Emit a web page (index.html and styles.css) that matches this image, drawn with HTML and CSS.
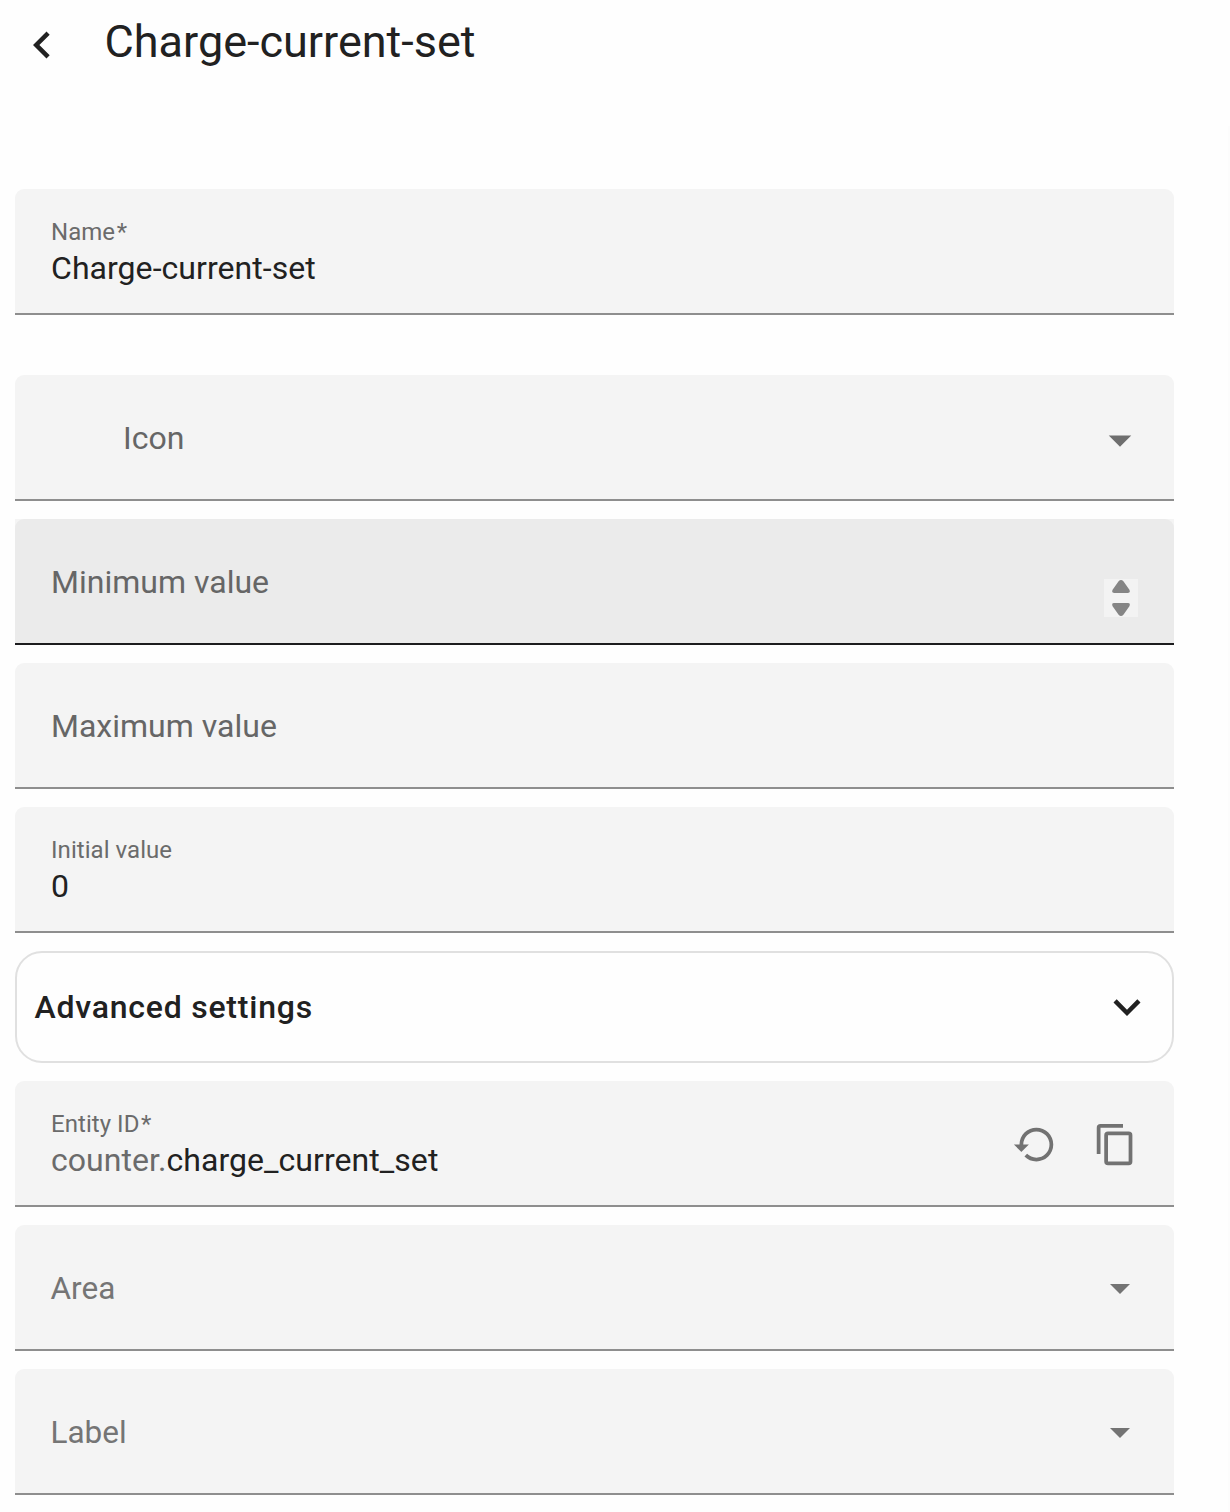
FILE: index.html
```html
<!DOCTYPE html>
<html lang="en">
<head>
<meta charset="utf-8">
<title>Charge-current-set</title>
<link rel="stylesheet" href="styles.css">
</head>
<body>
<main class="dialog">
  <header class="header">
    <svg class="icon" viewBox="0 0 24 24"><path d="M15.41 16.58L10.83 12l4.58-4.59L14 6l-6 6 6 6z"/></svg>
    <h1 class="title">Charge-current-set</h1>
  </header>
  <form class="form">
    <div class="field field-name">
      <div class="stack"><span class="caption">Name<span class="star">*</span></span><span class="value">Charge-current-set</span></div>
    </div>
    <div class="field field-icon">
      <span class="label">Icon</span>
      <svg class="icon arrow" viewBox="0 0 24 24"><path d="M7 10l5 5 5-5z"/></svg>
    </div>
    <div class="hover-wrap">
      <div class="field field-hover">
        <span class="label">Minimum value</span>
        <svg class="spinner" viewBox="0 0 34 38"><path d="M14.6 2.2Q17 -.2 19.4 2.2L25.4 10.8Q26.8 14 23.8 14H10.2Q7.2 14 8.6 10.8zM14.6 35.8Q17 38.2 19.4 35.8L25.4 27.2Q26.8 24 23.8 24H10.2Q7.2 24 8.6 27.2z"/></svg>
      </div>
    </div>
    <div class="field"><span class="label">Maximum value</span></div>
    <div class="field">
      <div class="stack"><span class="caption">Initial value</span><span class="value">0</span></div>
    </div>
    <div class="panel">
      <span class="panel-title">Advanced settings</span>
      <svg class="icon" viewBox="0 0 24 24"><path d="M7.41 8.58L12 13.17l4.59-4.59L18 10l-6 6-6-6z"/></svg>
    </div>
    <div class="field">
      <div class="stack"><span class="caption">Entity ID<span class="star">*</span></span><span class="value"><span class="prefix">counter.</span>charge_current_set</span></div>
      <div class="actions">
        <svg class="action" viewBox="0 0 24 24"><path d="M13 3A9 9 0 0 0 4 12H1L4.89 15.89L4.96 16.03L9 12H6A7 7 0 0 1 13 5A7 7 0 0 1 20 12A7 7 0 0 1 13 19C11.07 19 9.32 18.21 8.06 16.94L6.64 18.36C8.27 20 10.5 21 13 21A9 9 0 0 0 22 12A9 9 0 0 0 13 3Z"/></svg>
        <svg class="action" viewBox="0 0 24 24"><path d="M19 21H8V7H19M19 5H8A2 2 0 0 0 6 7V21A2 2 0 0 0 8 23H19A2 2 0 0 0 21 21V7A2 2 0 0 0 19 5M16 1H4A2 2 0 0 0 2 3V17H4V3H16V1Z"/></svg>
      </div>
    </div>
    <div class="field">
      <span class="label picker">Area</span>
      <svg class="icon arrow-small" viewBox="0 0 24 24"><path d="M7 10l5 5 5-5z"/></svg>
    </div>
    <div class="field">
      <span class="label picker">Label</span>
      <svg class="icon arrow-small" viewBox="0 0 24 24"><path d="M7 10l5 5 5-5z"/></svg>
    </div>
  </form>
</main>
</body>
</html>
```
FILE: styles.css
```css
* { box-sizing: border-box; }
body {
  margin: 0;
  height: 1512px;
  overflow: hidden;
  /* faint scroll track along the right edge, below the header */
  background: linear-gradient(#fcfcfc, #fcfcfc) right 126px / 2px 100% no-repeat #fefefe;
  color: #212121;
  font-family: Roboto, "Liberation Sans", sans-serif;
}
svg { display: block; flex: none; fill: currentColor; }
.header {
  display: flex;
  gap: 35.5px;
  height: 189px;
  padding: 18px 15px 0;
}
.icon { width: 54px; height: 54px; }
.title {
  margin: -3px 0 0;
  font-size: 45px;
  font-weight: 400;
  line-height: 54px;
}
.form {
  display: flex;
  flex-direction: column;
  gap: 18px;
  width: 1159px;
  margin-left: 15px;
}
.field {
  display: flex;
  justify-content: space-between;
  height: 126px;
  padding: 0 36px;
  border-bottom: 2px solid #8e8e8e;
  border-radius: 9px 9px 0 0;
  background: #f4f4f4;
}
.field-name { margin-bottom: 42px; }
.field-icon { padding-left: 108px; }
.hover-wrap { background: #f4f4f4; }
.field-hover { background: #ebebeb; border-color: #1c1c1e; }
.label, .value {
  font-size: 32px;
  line-height: 38px;
  white-space: nowrap;
}
.value { letter-spacing: 0.05px; }
.label { margin-top: 44px; color: #666; letter-spacing: 0.01px; }
.picker { margin: 45px 0 0 -0.5px; font-size: 31.5px; color: #757575; letter-spacing: 0; }
.stack { display: flex; flex-direction: column; padding-top: 28px; }
.caption {
  font-size: 24px;
  line-height: 30px;
  height: 32px;
  color: #6b6b6b;
  letter-spacing: 0.05px;
}
.star { margin-left: 1.5px; }
.prefix { color: #6b6b6b; }
.arrow { margin: 38px -9px 0 0; color: #6e6e6e; }
.arrow-small { width: 48px; height: 48px; margin: 39.4px -6px 0 0; color: #737373; }
.spinner {
  width: 34px;
  height: 38px;
  margin-top: 60px;
  background: #f3f3f3;
  color: #858585;
}
.panel {
  display: flex;
  align-items: center;
  justify-content: space-between;
  height: 112px;
  padding: 0 18px 0 17.5px;
  border: 2px solid #e0e0e0;
  border-radius: 27px;
}
.panel-title {
  font-size: 32px;
  font-weight: 500;
  letter-spacing: 0.77px;
}
.actions { display: flex; gap: 36px; padding-top: 41px; }
.action { width: 45px; height: 45px; color: #727272; }
```
